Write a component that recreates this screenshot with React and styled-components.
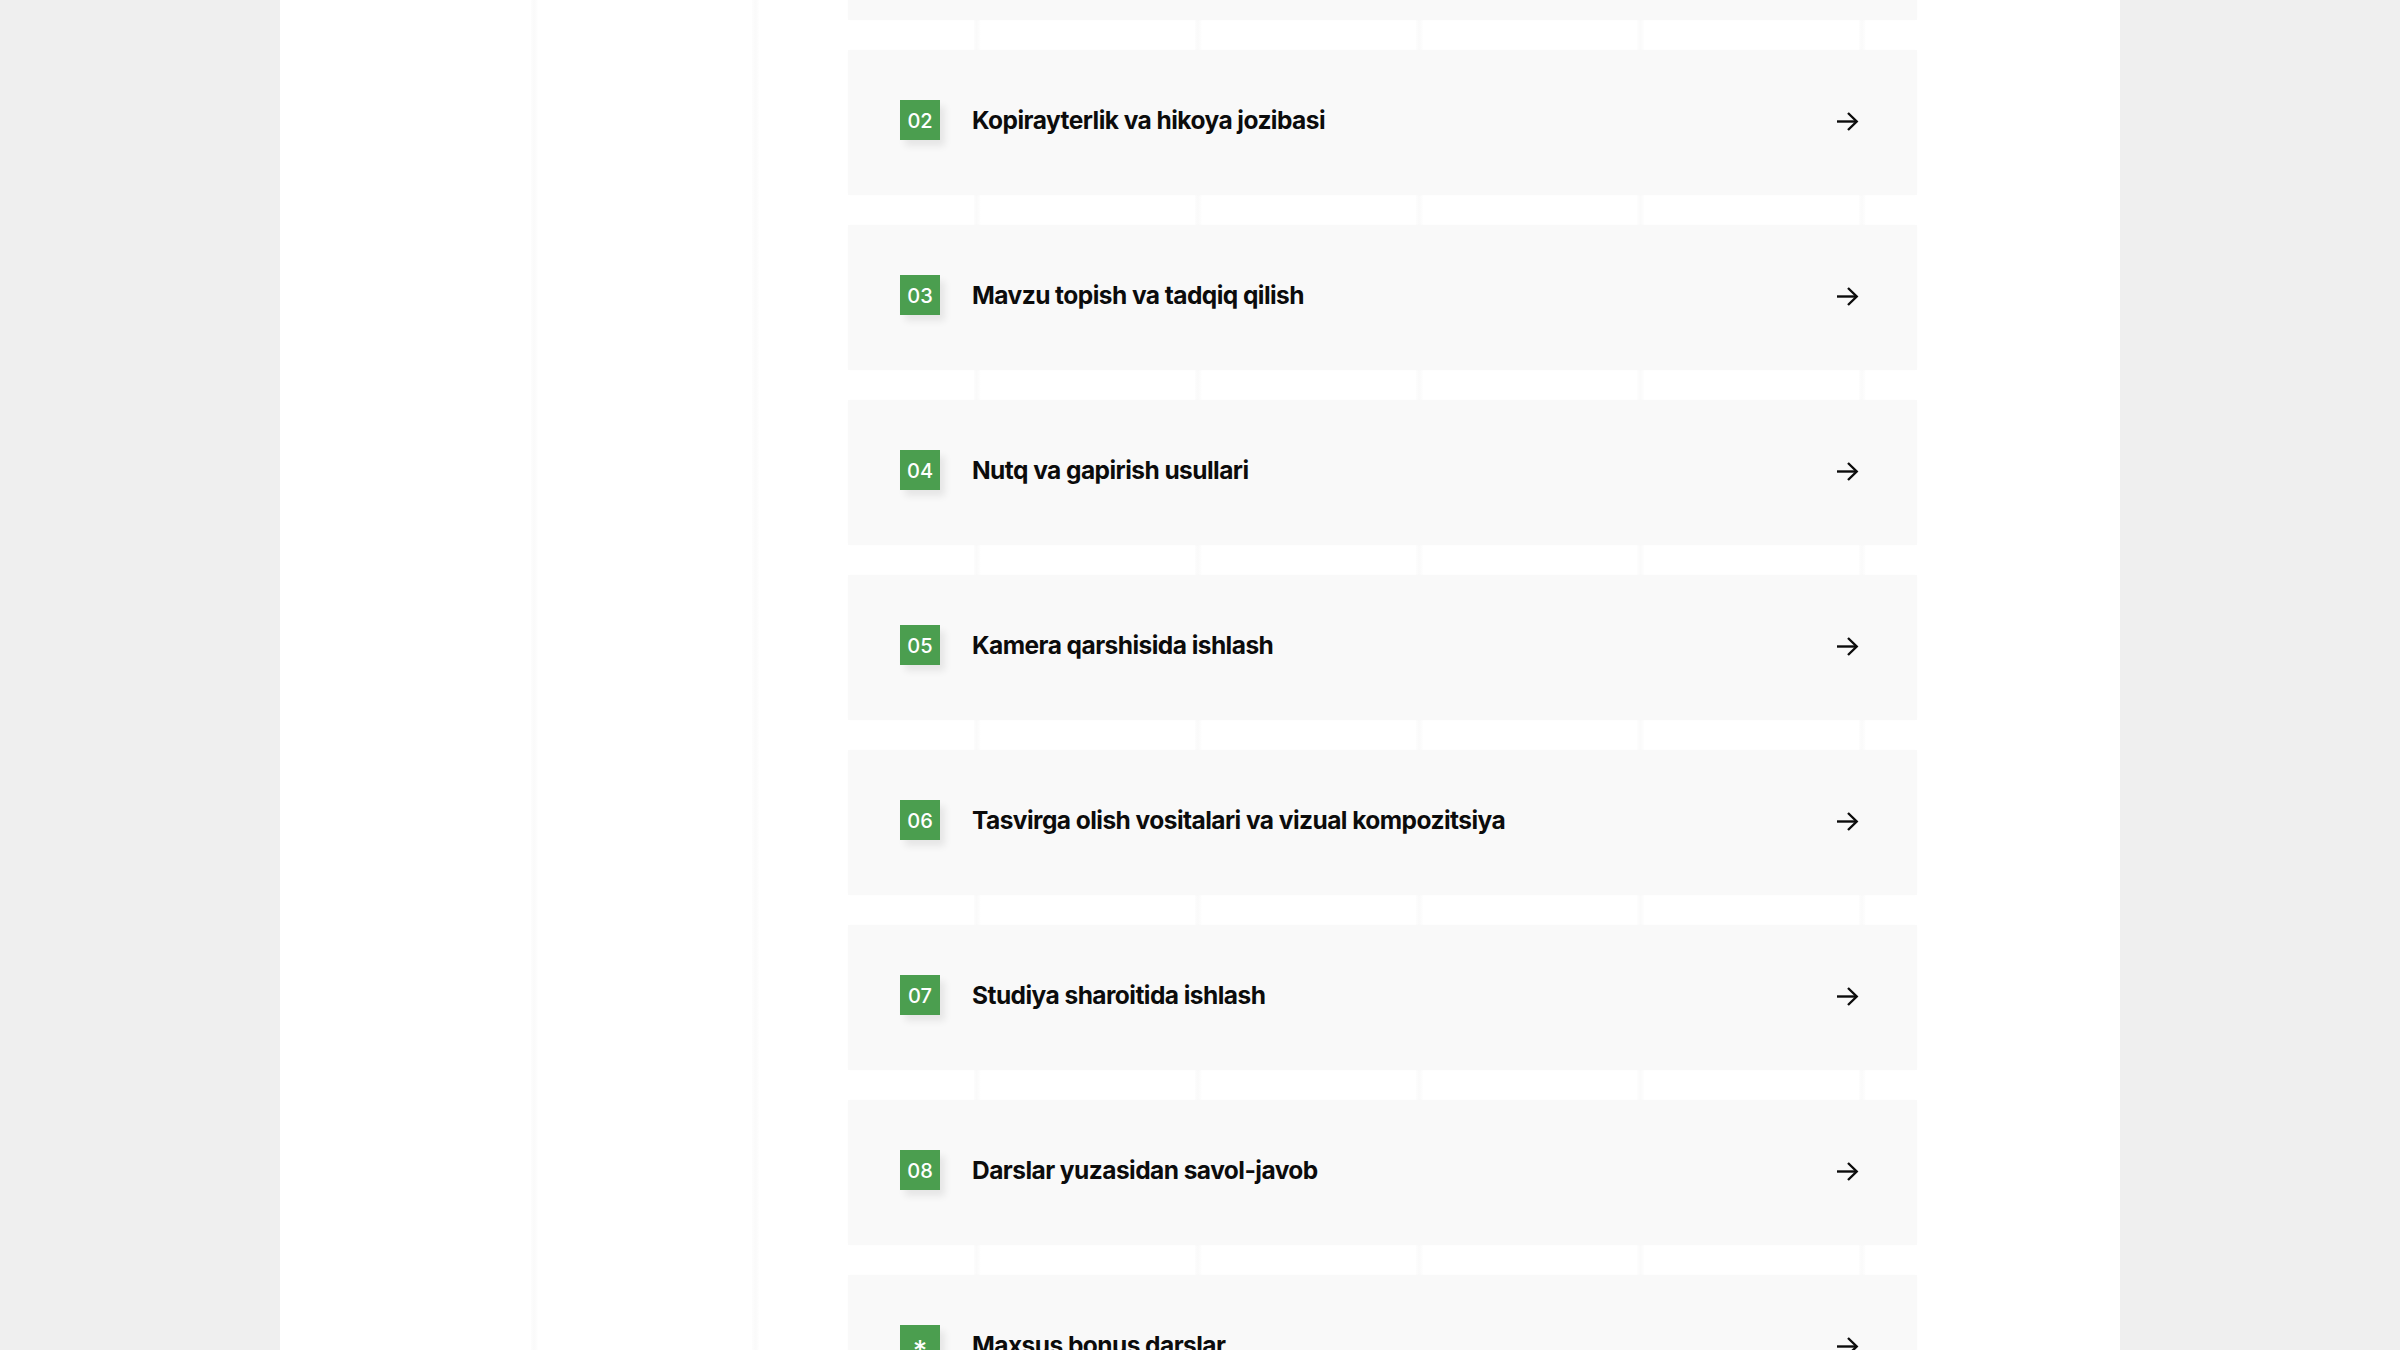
import React from "react";
import styled, { createGlobalStyle } from "styled-components";

const Global = createGlobalStyle`
  html, body {
    margin: 0;
    padding: 0;
    background: #efefef;
    height: 100%;
    overflow: hidden;
  }
  body {
    font-family: Inter, "Noto Sans", "Liberation Sans", sans-serif;
  }
`;

const Page = styled.div`
  width: 1840px;
  height: 1350px;
  margin: 0 auto;
  background-color: #ffffff;
  background-image: repeating-linear-gradient(
    90deg,
    #fdfdfd 0px,
    #fafafa 3px,
    #fdfdfd 6px,
    transparent 7px,
    transparent 221.3px
  );
  background-size: 1335px 100%;
  background-position: 251px 0;
  background-repeat: no-repeat;
  overflow: hidden;
  display: grid;
  grid-template-columns: 568px 1069px 1fr;
`;

const Spacer = styled.div``;

const List = styled.ul`
  list-style: none;
  margin: -125px 0 0;
  padding: 0;
  display: flex;
  flex-direction: column;
  gap: 30px;
`;

const Card = styled.li`
  height: 145px;
  box-sizing: border-box;
  background: #f9f9f9;
  box-shadow: 0 0 3px rgba(0, 0, 0, 0.012);
  display: flex;
  align-items: center;
  padding: 0 58px 0 52px;
`;

const Badge = styled.span`
  flex: none;
  width: 40px;
  height: 40px;
  background: #4b9e4f;
  color: #ffffff;
  display: flex;
  align-items: center;
  justify-content: center;
  font-size: ${(p) => (p.$star ? "28px" : "20px")};
  line-height: 1;
  font-weight: 500;
  box-shadow: 5px 6px 7px rgba(0, 0, 0, 0.08);
  margin-top: -6px;
  padding-top: ${(p) => (p.$star ? "12px" : "2px")};
  box-sizing: border-box;
`;

const Title = styled.span`
  flex: 1;
  margin-left: 32px;
  margin-top: -6px;
  font-size: 24.5px;
  font-weight: 700;
  letter-spacing: -0.55px;
  color: #0c0c0c;
`;

const Arrow = styled.svg`
  flex: none;
  width: 23px;
  height: 21px;
  margin-top: -2px;
`;

const lessons = [
  { n: "01", t: "Kirish va asosiy tushunchalar" },
  { n: "02", t: "Kopirayterlik va hikoya jozibasi" },
  { n: "03", t: "Mavzu topish va tadqiq qilish" },
  { n: "04", t: "Nutq va gapirish usullari" },
  { n: "05", t: "Kamera qarshisida ishlash" },
  { n: "06", t: "Tasvirga olish vositalari va vizual kompozitsiya" },
  { n: "07", t: "Studiya sharoitida ishlash" },
  { n: "08", t: "Darslar yuzasidan savol-javob" },
  { n: "*", t: "Maxsus bonus darslar", star: true },
];

export default function App() {
  return (
    <>
      <Global />
      <Page>
        <Spacer />
        <List>
          {lessons.map((l) => (
            <Card key={l.n}>
              <Badge $star={l.star}>{l.n}</Badge>
              <Title>{l.t}</Title>
              <Arrow viewBox="0 0 23 21" fill="none" stroke="#0c0c0c" strokeWidth="2.4" strokeLinecap="butt" strokeLinejoin="miter">
                <path d="M1 10.5h19.5" />
                <path d="M12 2l8.7 8.5L12 19" />
              </Arrow>
            </Card>
          ))}
        </List>
        <Spacer />
      </Page>
    </>
  );
}
